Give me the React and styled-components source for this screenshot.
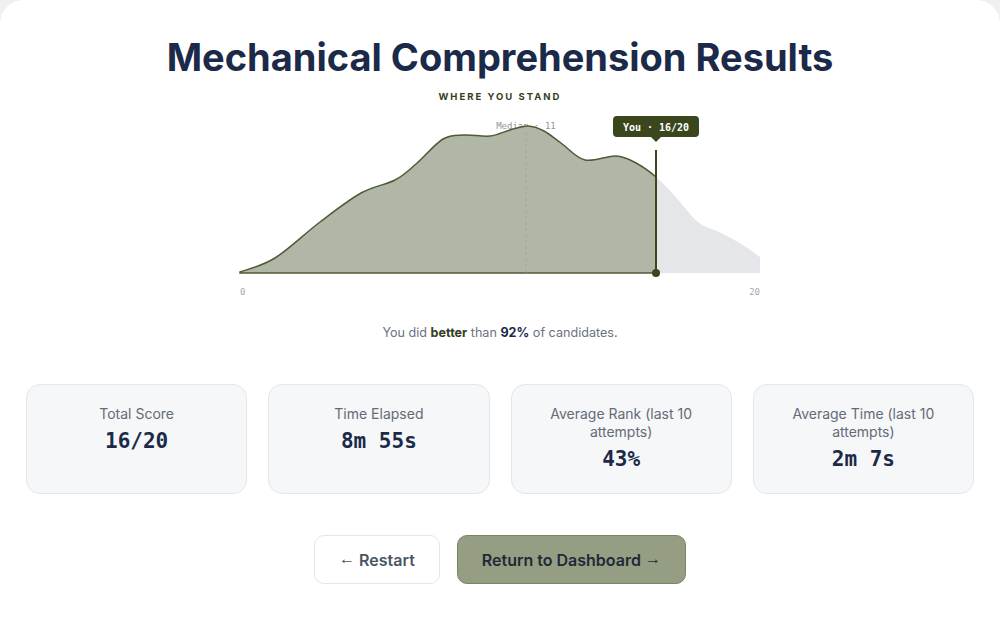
import React from "react";
import styled, { createGlobalStyle } from "styled-components";

const GlobalStyle = createGlobalStyle`
    html, body {
        margin: 0;
        padding: 0;
        background: #eef0f2;
    }
    * {
        box-sizing: border-box;
    }
`;

const Page = styled.div`
    min-height: 624px;
    background: #ffffff;
    border-radius: 24px 24px 0 0;
    padding: 34px 26px 40px;
    display: flex;
    flex-direction: column;
    align-items: center;
    font-family: Inter, "Noto Sans", sans-serif;
`;

const Title = styled.h1`
    margin: 0;
    font-size: 38px;
    line-height: 46px;
    font-weight: 700;
    letter-spacing: 0;
    color: #1b2a48;
`;

const Eyebrow = styled.div`
    margin-top: 11px;
    font-size: 9.5px;
    line-height: 12px;
    font-weight: 700;
    letter-spacing: 2px;
    color: #34401c;
    text-transform: uppercase;
`;

const ChartSvg = styled.svg`
    display: block;
    margin-top: 5px;
    overflow: visible;
`;

const Summary = styled.p`
    margin: 24px 0 0;
    font-size: 12.6px;
    line-height: 18px;
    color: #6b7280;
`;

const Strong = styled.b`
    font-weight: 700;
    color: ${(p) => p.$tone === "olive" ? "#34401c" : "#1b2a48"};
`;

const StatGrid = styled.div`
    margin-top: 42px;
    width: 100%;
    display: grid;
    grid-template-columns: repeat(4, 1fr);
    gap: 21px;
`;

const StatCard = styled.div`
    height: 110px;
    padding: 20px 22px;
    background: #f5f7f9;
    border: 1px solid #e3e6ea;
    border-radius: 14px;
    display: flex;
    flex-direction: column;
    align-items: center;
    text-align: center;
`;

const StatLabel = styled.div`
    font-size: 14px;
    line-height: 18px;
    color: #646b77;
`;

const StatValue = styled.div`
    margin-top: 5px;
    font-family: "DejaVu Sans Mono", "Liberation Mono", monospace;
    font-weight: 700;
    font-size: 21px;
    line-height: 26px;
    color: #1b2a48;
`;

const Actions = styled.div`
    margin-top: 41px;
    display: flex;
    gap: 17px;
`;

const Button = styled.button`
    height: 49px;
    padding: 0 24px;
    border-radius: 10px;
    font-family: Inter, "Noto Sans", sans-serif;
    font-size: 16px;
    font-weight: 600;
    cursor: pointer;
    border: 1px solid ${(p) => (p.$primary ? "#7b8466" : "#e3e6ea")};
    background: ${(p) => (p.$primary ? "#959d82" : "#ffffff")};
    color: ${(p) => (p.$primary ? "#1f2937" : "#4b5563")};
`;

const Arrow = styled.span`
    font-family: "Liberation Sans", Arial, sans-serif;
    font-weight: 400;
    vertical-align: 2px;
`;

// points of the distribution curve, in svg coords
const POINTS = [
    [0, 164], [35, 150], [80, 114], [121, 85], [155, 72], [176, 56],
    [203, 31], [224, 27], [250, 28], [270, 22], [288, 18], [304, 23],
    [321, 35], [345, 52], [376, 48], [396, 55], [416, 69], [434, 87],
    [458, 114], [479, 124], [503, 137], [520, 149],
];

const BASE = 165;
const W = 520;
const YOU_X = 416;
const MEDIAN_X = 286;

function smoothPath(pts) {
    let d = `M ${pts[0][0]} ${pts[0][1]}`;
    for (let i = 0; i < pts.length - 1; i++) {
        const p0 = pts[i - 1] || pts[i];
        const p1 = pts[i];
        const p2 = pts[i + 1];
        const p3 = pts[i + 2] || p2;
        const c1x = p1[0] + (p2[0] - p0[0]) / 6;
        const c1y = p1[1] + (p2[1] - p0[1]) / 6;
        const c2x = p2[0] - (p3[0] - p1[0]) / 6;
        const c2y = p2[1] - (p3[1] - p1[1]) / 6;
        d += ` C ${c1x} ${c1y} ${c2x} ${c2y} ${p2[0]} ${p2[1]}`;
    }
    return d;
}

const curve = smoothPath(POINTS);
const area = `${curve} L ${W} ${BASE} L 0 ${BASE} Z`;

const Chart = () => (
    <ChartSvg width={W} height={192} viewBox={`0 0 ${W} 192`}>
        <defs>
            <clipPath id="you-clip">
                <rect x="-2" y="0" width={YOU_X + 2} height="180" />
            </clipPath>
        </defs>

        <text
            x={MEDIAN_X}
            y={21}
            textAnchor="middle"
            fontFamily="DejaVu Sans Mono, monospace"
            fontSize="9"
            fill="#8f949c"
        >
            Median · 11
        </text>

        <path d={area} fill="#e4e6ea" />
        <path
            d={area}
            fill="#b0b7a7"
            stroke="#4f5b36"
            strokeWidth="1.5"
            clipPath="url(#you-clip)"
        />

        <line
            x1={MEDIAN_X}
            y1={24}
            x2={MEDIAN_X}
            y2={BASE}
            stroke="#9aa08f"
            strokeWidth="1"
            strokeDasharray="3 3"
            opacity="0.6"
        />

        <line x1={YOU_X} y1={42} x2={YOU_X} y2={BASE} stroke="#3a471d" strokeWidth="2" />
        <circle cx={YOU_X} cy={BASE} r="4" fill="#3a471d" />

        <rect x={YOU_X - 43} y={8} width="86" height="21" rx="4" fill="#3a471d" />
        <path d={`M ${YOU_X - 5} 29 L ${YOU_X} 34 L ${YOU_X + 5} 29 Z`} fill="#3a471d" />
        <text
            x={YOU_X}
            y={22.5}
            textAnchor="middle"
            fontFamily="DejaVu Sans Mono, monospace"
            fontWeight="700"
            fontSize="10"
            fill="#ffffff"
        >
            You · 16/20
        </text>

        <text x={0} y={187} fontFamily="DejaVu Sans Mono, monospace" fontSize="9" fill="#a3a8b3">
            0
        </text>
        <text
            x={W}
            y={187}
            textAnchor="end"
            fontFamily="DejaVu Sans Mono, monospace"
            fontSize="9"
            fill="#a3a8b3"
        >
            20
        </text>
    </ChartSvg>
);

const stats = [
    { label: "Total Score", value: "16/20" },
    { label: "Time Elapsed", value: "8m 55s" },
    { label: "Average Rank (last 10 attempts)", value: "43%" },
    { label: "Average Time (last 10 attempts)", value: "2m 7s" },
];

const App = () => {
    return (
        <>
            <GlobalStyle />
            <Page>
                <Title>Mechanical Comprehension Results</Title>
                <Eyebrow>Where you stand</Eyebrow>
                <Chart />
                <Summary>
                    You did <Strong $tone="olive">better</Strong> than <Strong>92%</Strong> of candidates.
                </Summary>

                <StatGrid>
                    {stats.map((s) => (
                        <StatCard key={s.label}>
                            <StatLabel>{s.label}</StatLabel>
                            <StatValue>{s.value}</StatValue>
                        </StatCard>
                    ))}
                </StatGrid>

                <Actions>
                    <Button><Arrow>←</Arrow> Restart</Button>
                    <Button $primary>Return to Dashboard <Arrow>→</Arrow></Button>
                </Actions>
            </Page>
        </>
    );
};

export default App;
